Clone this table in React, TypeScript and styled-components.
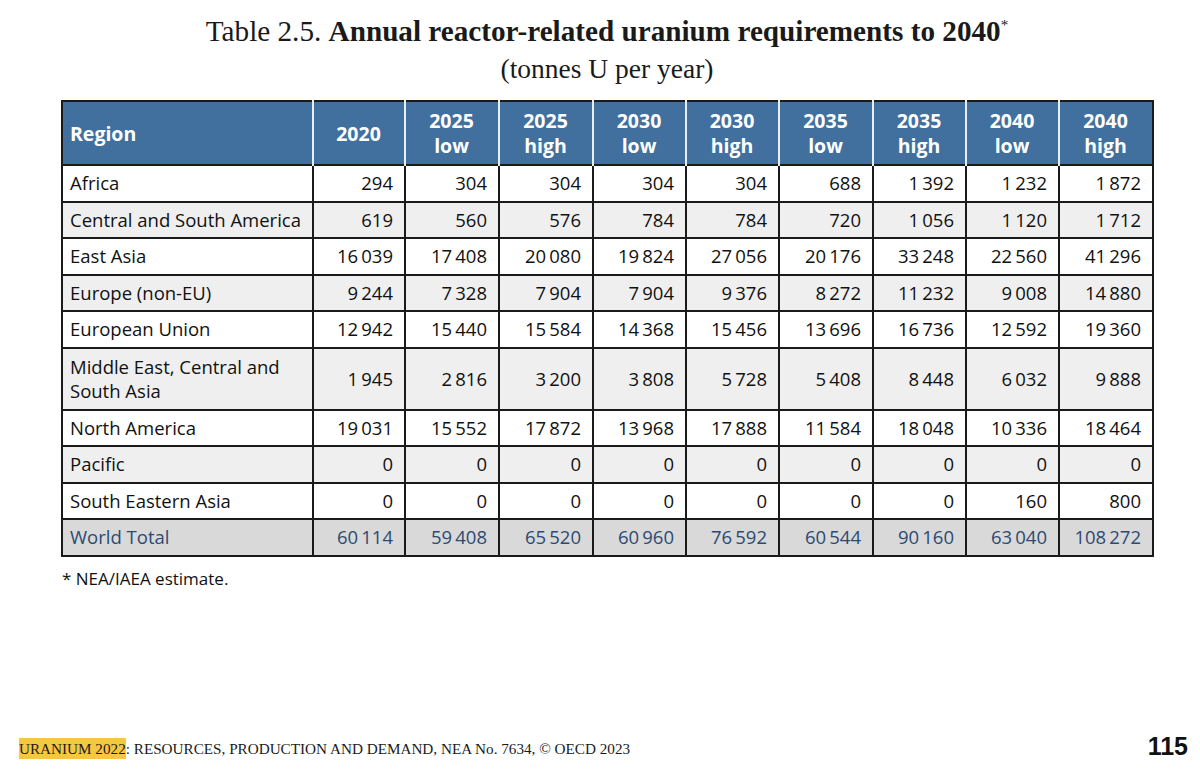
import React from 'react'
import styled, {createGlobalStyle} from 'styled-components'

const GlobalStyle = createGlobalStyle`
	html, body {
		margin: 0;
		padding: 0;
		background: #ffffff;
	}
	body {
		font-family: 'Open Sans', 'Liberation Sans', sans-serif;
		color: #111111;
	}
`

/****************************************************** data ***************************************************/
const columns = [
	{year: '2020', kind: ''},
	{year: '2025', kind: 'low'},
	{year: '2025', kind: 'high'},
	{year: '2030', kind: 'low'},
	{year: '2030', kind: 'high'},
	{year: '2035', kind: 'low'},
	{year: '2035', kind: 'high'},
	{year: '2040', kind: 'low'},
	{year: '2040', kind: 'high'},
]

const colWidths = [251, 92, 94, 94, 93, 93, 94, 93, 93, 94]

const rows: {region: string, values: string[], tall?: boolean}[] = [
	{region: 'Africa', values: ['294', '304', '304', '304', '304', '688', '1 392', '1 232', '1 872']},
	{region: 'Central and South America', values: ['619', '560', '576', '784', '784', '720', '1 056', '1 120', '1 712']},
	{region: 'East Asia', values: ['16 039', '17 408', '20 080', '19 824', '27 056', '20 176', '33 248', '22 560', '41 296']},
	{region: 'Europe (non-EU)', values: ['9 244', '7 328', '7 904', '7 904', '9 376', '8 272', '11 232', '9 008', '14 880']},
	{region: 'European Union', values: ['12 942', '15 440', '15 584', '14 368', '15 456', '13 696', '16 736', '12 592', '19 360']},
	{region: 'Middle East, Central and South Asia', values: ['1 945', '2 816', '3 200', '3 808', '5 728', '5 408', '8 448', '6 032', '9 888'], tall: true},
	{region: 'North America', values: ['19 031', '15 552', '17 872', '13 968', '17 888', '11 584', '18 048', '10 336', '18 464']},
	{region: 'Pacific', values: ['0', '0', '0', '0', '0', '0', '0', '0', '0']},
	{region: 'South Eastern Asia', values: ['0', '0', '0', '0', '0', '0', '0', '160', '800']},
]

const total = ['60 114', '59 408', '65 520', '60 960', '76 592', '60 544', '90 160', '63 040', '108 272']

const thin = (s: string) => s.replace(/ /g, '\u2009')

/****************************************************** styles ***************************************************/
const Page = styled.div`
	width: 1200px;
	height: 773px;
	display: flex;
	flex-direction: column;
	overflow: hidden;
`

const Heading = styled.div`
	display: flex;
	flex-direction: column;
	align-items: center;
	padding-top: 14px;
	padding-left: 14px;
	font-family: 'Liberation Serif', 'DejaVu Serif', serif;
	color: #1a1a1a;
`

const Title = styled.div`
	font-size: 29.2px;
	line-height: 34px;
	b {
		font-weight: 700;
	}
	sup {
		font-size: 15px;
		vertical-align: 11px;
		line-height: 0;
	}
`

const Subtitle = styled.div`
	font-size: 27.5px;
	line-height: 32px;
	margin-top: 5px;
`

const TableWrap = styled.div`
	padding: 15px 0 0 61px;
`

const Table = styled.table`
	border-collapse: collapse;
	table-layout: fixed;
	font-size: 18.5px;
	border: 2px solid #1a1a1a;
`

const HeadCell = styled.th<{$left?: boolean}>`
	background: #41709f;
	color: #ffffff;
	font-weight: 700;
	font-size: 19.5px;
	height: 62px;
	line-height: 25px;
	padding: 0 8px 0 7px;
	text-align: ${p => p.$left ? 'left' : 'center'};
	border-left: 2px solid #e8eef5;
	&:first-child {
		border-left: none;
	}
`

const Row = styled.tr<{$shade: 'white' | 'light' | 'total'}>`
	background: ${p => p.$shade === 'white' ? '#ffffff' : p.$shade === 'light' ? '#efefef' : '#d9d9d9'};
	color: ${p => p.$shade === 'total' ? '#2d4a72' : '#111111'};
`

const Cell = styled.td<{$left?: boolean, $tall?: boolean}>`
	height: ${p => p.$tall ? '60px' : '34.5px'};
	padding: 0 ${p => p.$left ? '6px' : '11px'} 0 7px;
	line-height: 24px;
	text-align: ${p => p.$left ? 'left' : 'right'};
	border: 2px solid #1a1a1a;
	white-space: ${p => p.$left ? 'normal' : 'nowrap'};
`

const Note = styled.div`
	padding: 10px 0 0 62px;
	font-size: 17px;
	color: #111111;
`

const Footer = styled.div`
	margin-top: auto;
	display: flex;
	align-items: center;
	justify-content: space-between;
	padding: 0 12px 12px 19px;
`

const FooterText = styled.div`
	font-family: 'Liberation Serif', 'DejaVu Serif', serif;
	font-size: 15.2px;
	color: #1a1a1a;
	padding-top: 4px;
`

const Highlight = styled.span`
	background: #f7c744;
	padding: 2px 0;
`

const PageNumber = styled.div`
	font-family: 'Liberation Sans', 'Open Sans', sans-serif;
	font-weight: 700;
	font-size: 25px;
	color: #111111;
`

/****************************************************** component ***************************************************/
export default function App() {
	return (
		<Page>
			<GlobalStyle />
			<Heading>
				<Title>Table 2.5. <b>Annual reactor-related uranium requirements to 2040</b><sup>*</sup></Title>
				<Subtitle>(tonnes U per year)</Subtitle>
			</Heading>
			<TableWrap>
				<Table>
					<colgroup>
						{colWidths.map((w, i) => <col key={i} style={{width: w}} />)}
					</colgroup>
					<thead>
						<tr>
							<HeadCell $left>Region</HeadCell>
							{columns.map((c, i) => (
								<HeadCell key={i}>
									{c.year}
									{c.kind && <><br />{c.kind}</>}
								</HeadCell>
							))}
						</tr>
					</thead>
					<tbody>
						{rows.map((r, i) => (
							<Row key={r.region} $shade={i % 2 === 0 ? 'white' : 'light'}>
								<Cell $left $tall={r.tall}>{r.region}</Cell>
								{r.values.map((v, j) => <Cell key={j} $tall={r.tall}>{thin(v)}</Cell>)}
							</Row>
						))}
						<Row $shade={'total'}>
							<Cell $left>World Total</Cell>
							{total.map((v, j) => <Cell key={j}>{thin(v)}</Cell>)}
						</Row>
					</tbody>
				</Table>
			</TableWrap>
			<Note>* NEA/IAEA estimate.</Note>
			<Footer>
				<FooterText><Highlight>URANIUM 2022</Highlight>: RESOURCES, PRODUCTION AND DEMAND, NEA No. 7634, © OECD 2023</FooterText>
				<PageNumber>115</PageNumber>
			</Footer>
		</Page>
	)
}
